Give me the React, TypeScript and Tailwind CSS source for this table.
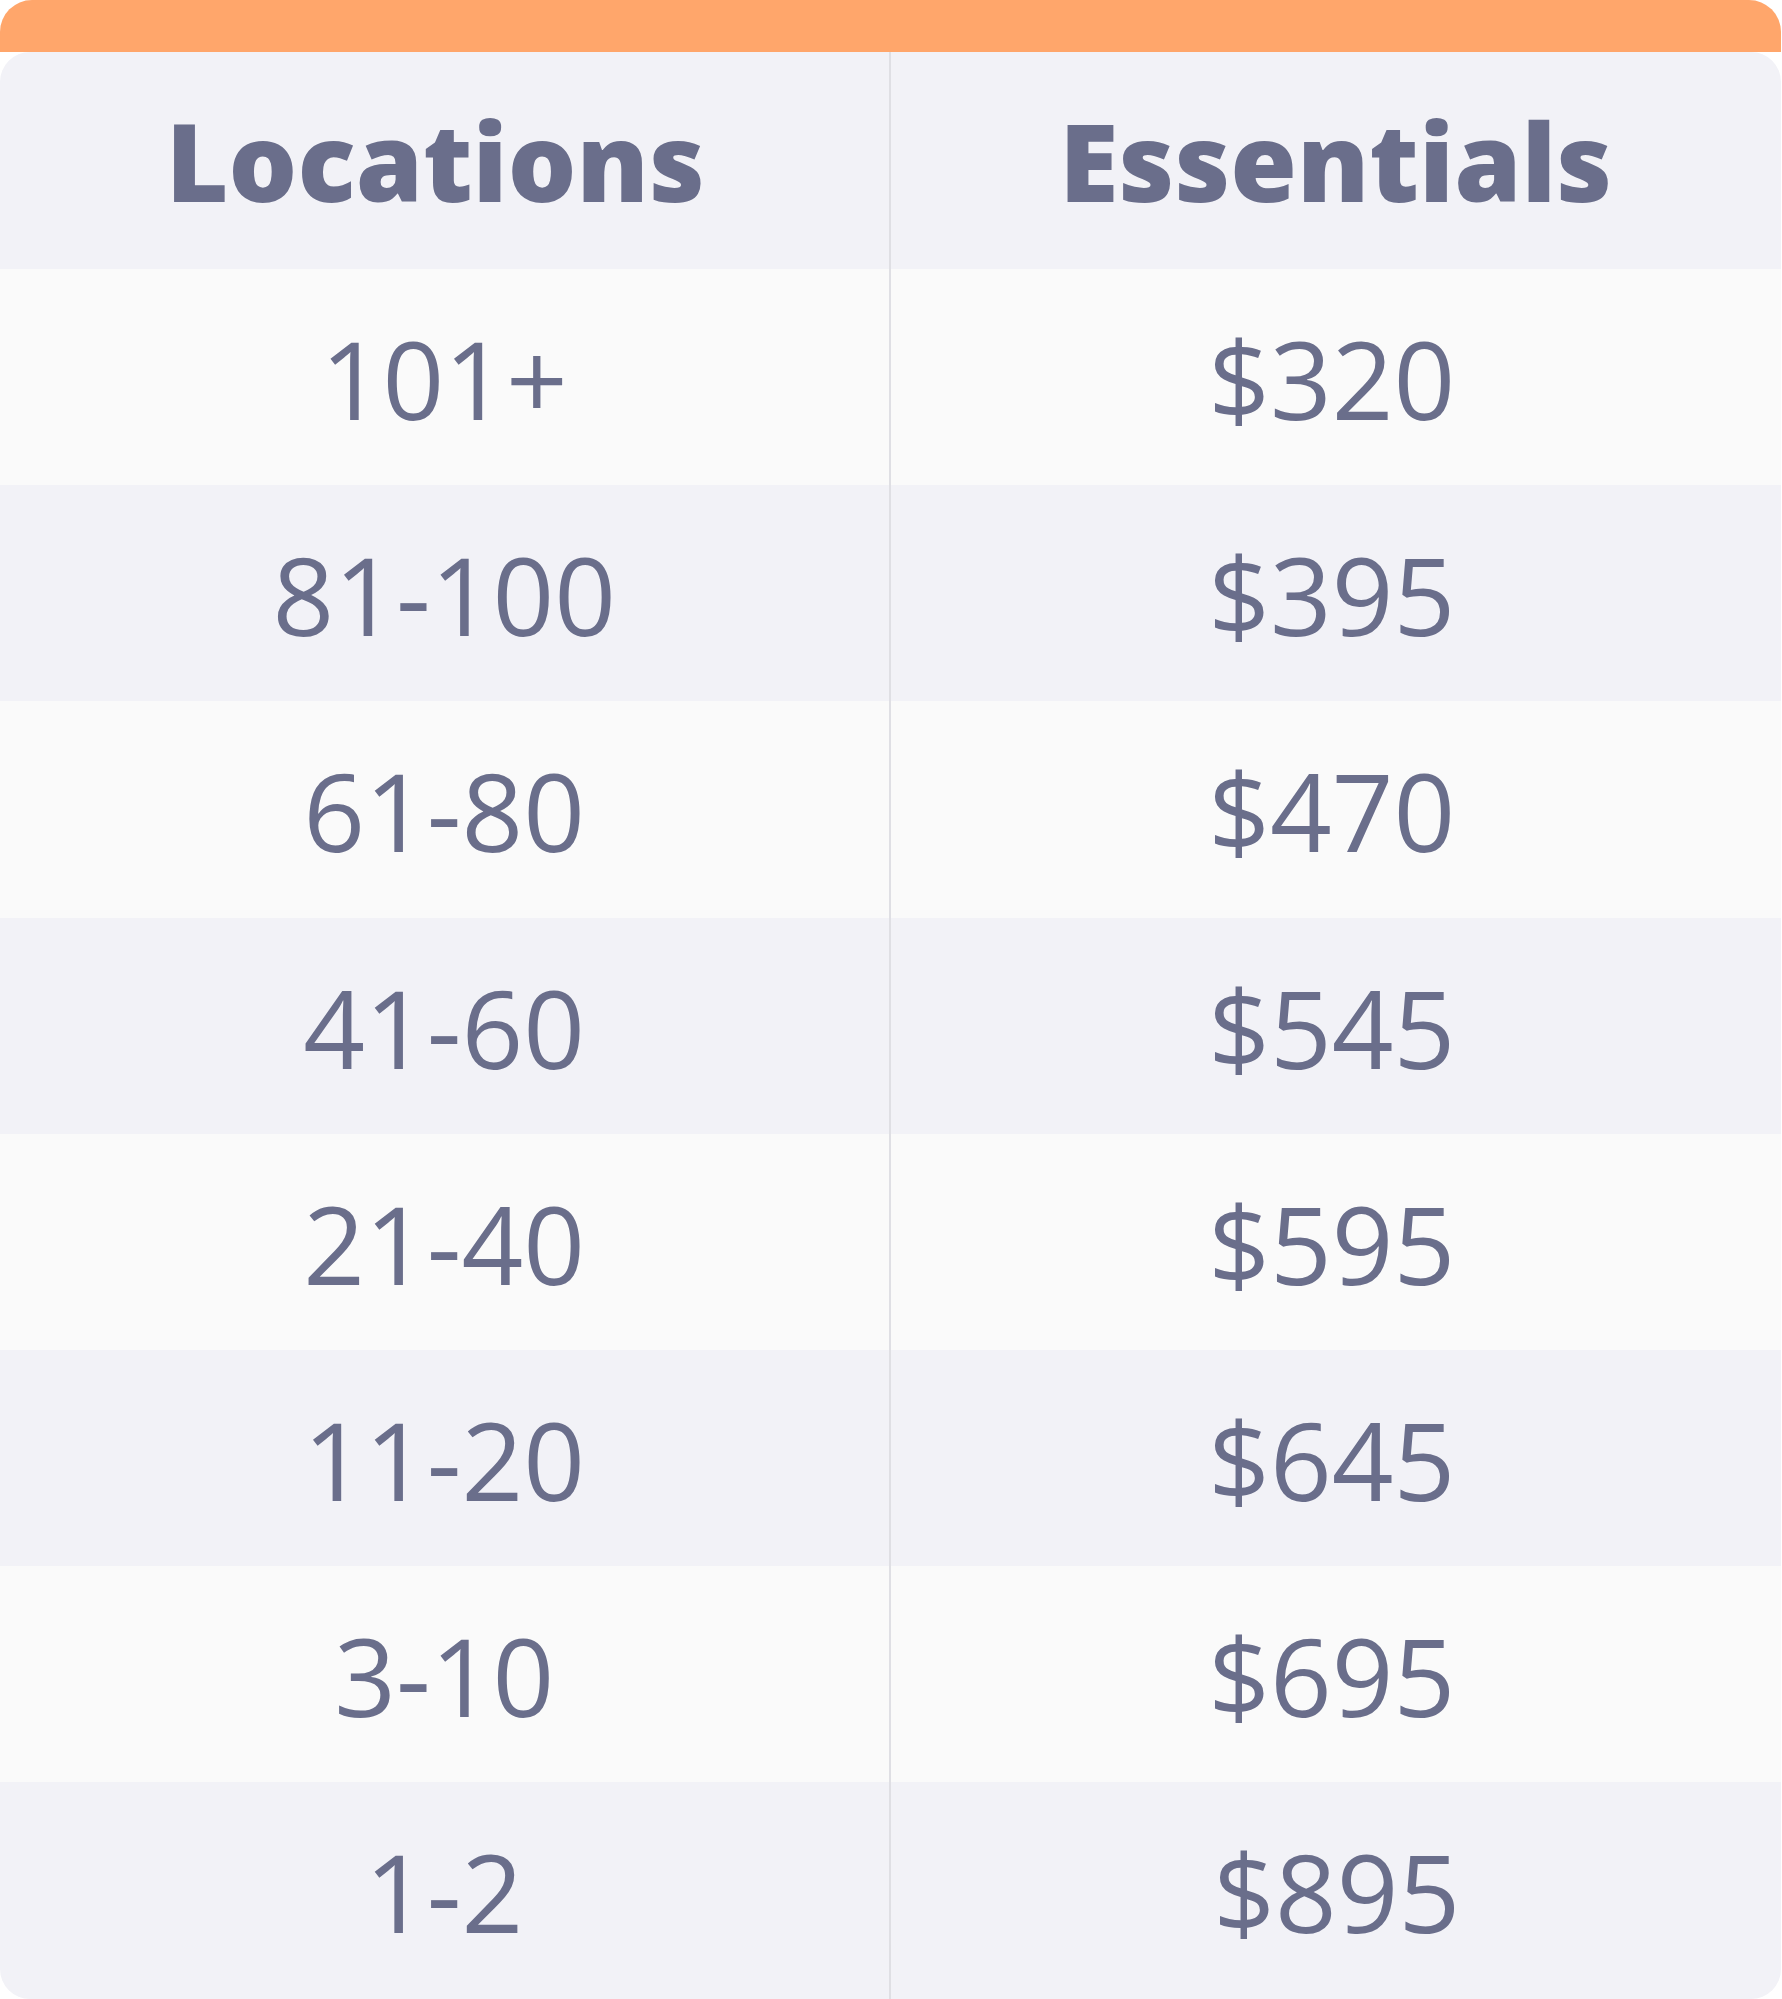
const rows = [
  { locations: "101+", price: "$320" },
  { locations: "81-100", price: "$395" },
  { locations: "61-80", price: "$470" },
  { locations: "41-60", price: "$545" },
  { locations: "21-40", price: "$595" },
  { locations: "11-20", price: "$645" },
  { locations: "3-10", price: "$695" },
  { locations: "1-2", price: "$895" },
];

const App = () => {
  return (
    <div className="w-[1781px] bg-white font-['Open_Sans',sans-serif] text-[#6a6e8b]">
      <div className="h-[52px] rounded-t-[32px] bg-[#ffa66b]" />
      <div className="overflow-hidden rounded-[30px]">
        <div className="grid h-[217px] grid-cols-2 bg-[#f2f2f7]">
          <div className="flex items-center justify-center border-r-2 border-[#dfdfe4] pr-[18px] text-[108px] font-extrabold leading-none">
            Locations
          </div>
          <div className="flex items-center justify-center text-[108px] font-extrabold leading-none">
            Essentials
          </div>
        </div>
        {rows.map((row, i) => (
          <div
            key={row.locations}
            className={
              "grid h-[216.2px] grid-cols-2 " +
              (i % 2 === 0 ? "bg-[#fafafa]" : "bg-[#f2f2f7]")
            }
          >
            <div className="flex items-center justify-center border-r-2 border-[#dfdfe4] pt-1 text-[108px] leading-none">
              {row.locations}
            </div>
            <div
              className={
                "flex items-center justify-center pt-1 text-[108px] leading-none " +
                (i === rows.length - 1 ? "pl-[2px]" : "pr-[8px]")
              }
            >
              {row.price}
            </div>
          </div>
        ))}
      </div>
    </div>
  );
};

export default App;
